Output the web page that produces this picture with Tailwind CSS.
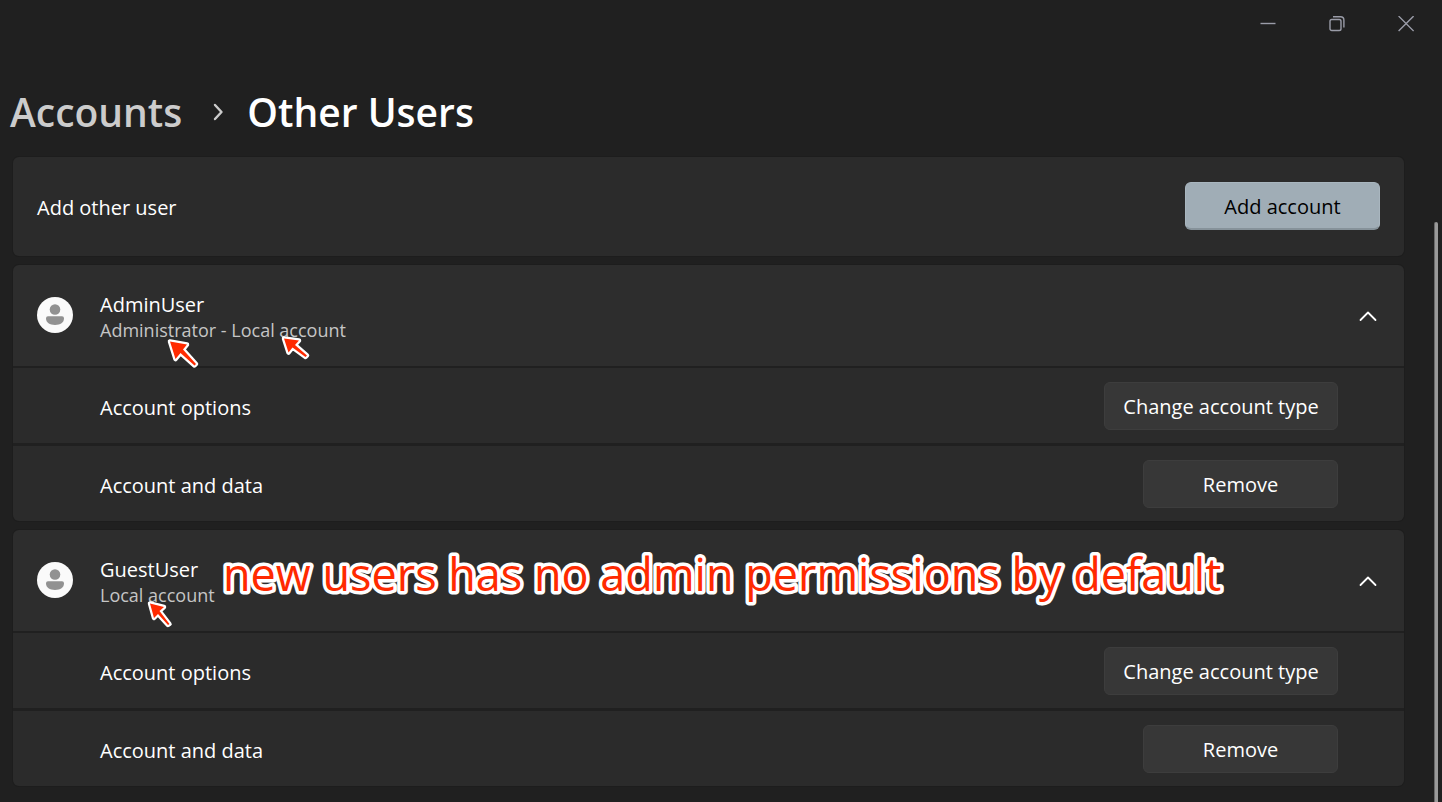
<!DOCTYPE html>
<html lang="en">
<head>
<meta charset="utf-8">
<meta name="viewport" content="width=device-width, initial-scale=1">
<title>Accounts - Other Users</title>
<script src="https://cdn.jsdelivr.net/npm/@tailwindcss/browser@4"></script>
</head>
<body class="relative min-h-screen overflow-hidden bg-[#202020] font-['Open_Sans','Noto_Sans',sans-serif] text-xl text-white">
<header class="flex h-12 justify-end pr-0.5 text-[#9a9ca8]">
  <button type="button" aria-label="Minimize" class="flex w-[69px] items-center justify-center"><svg class="size-4" viewBox="0 0 16 16" fill="none" stroke="currentColor" stroke-width="1.4"><path d="M.5 7.5h15"/></svg></button>
  <button type="button" aria-label="Restore" class="flex w-[69px] items-center justify-center"><svg class="size-4" viewBox="0 0 16 16" fill="none" stroke="currentColor" stroke-width="1.4"><rect x="1" y="3.5" width="11" height="11" rx="1.8"/><path d="M4 .8h7.5a3.4 3.4 0 0 1 3.4 3.4v7.3"/></svg></button>
  <button type="button" aria-label="Close" class="flex w-[69px] items-center justify-center"><svg class="size-4" viewBox="0 0 16 16" fill="none" stroke="currentColor" stroke-width="1.4"><path d="M.6.1l15 15M15.600.1l-15 15"/></svg></button>
</header>

<main class="flex flex-col pr-[38px] pl-[13px]">
  <nav aria-label="Breadcrumb" class="-ml-[3px] flex h-[109px] items-center pt-5 text-[39px] font-semibold">
    <a href="#" class="text-[#cccccc]">Accounts</a>
    <svg class="mr-[21px] ml-7 h-5 w-4" viewBox="0 0 16 20" fill="none" stroke="#cccccc" stroke-width="2.4" stroke-linecap="round" stroke-linejoin="round"><path d="M5 2l6.500 7-6.500 7"/></svg>
    <h1>Other Users</h1>
  </nav>

  <div class="flex flex-col gap-[9px]">
    <section class="flex h-[99px] items-center justify-between rounded-md bg-[#2b2b2b] px-6 pb-px shadow-[0_0_0_1px_#1d1d1d]">
      <h2 class="pt-1">Add other user</h2>
      <button type="button" class="h-12 w-[195px] rounded-md border border-b-2 border-[#a9b6bf] border-b-[#86929a] bg-[#a0adb6] pt-0.5 text-black">Add account</button>
    </section>

    <section class="flex flex-col rounded-md shadow-[0_0_0_1px_#1d1d1d]">
      <div class="relative flex h-[101px] items-center rounded-t-md bg-[#2d2d2d] px-6 pb-px">
        <svg class="size-9" viewBox="0 0 36 36"><circle cx="18" cy="18" r="18" fill="#fafafa"/><g fill="#919191"><circle cx="18" cy="12.500" r="5.300"/><path d="M11 19.300h14a2 2 0 0 1 2 2c0 4.400-3.600 6.700-9 6.700s-9-2.300-9-6.700a2 2 0 0 1 2-2z"/></g></svg>
        <div class="ml-[27px] flex flex-col pt-[3px]">
          <h2 class="leading-[26px]">AdminUser</h2>
          <p class="text-lg leading-6 text-[#c5c5c5]">Administrator - Local account</p>
        </div>
        <button type="button" aria-label="Collapse AdminUser" class="-mr-1 ml-auto p-1"><svg class="h-5 w-6" viewBox="0 0 24 20" fill="none" stroke="#fff" stroke-width="1.800" stroke-linecap="round" stroke-linejoin="round"><path d="M4.500 15l7.500-7.500 7.500 7.500"/></svg></button>
        <svg class="absolute top-[72px] left-[153px] h-8 w-9 overflow-visible" viewBox="0 0 36 32" stroke="#fff" stroke-width="4.500" stroke-linejoin="round" fill="#ff2a00" paint-order="stroke"><path d="M4 4.500l17 3-4 5 13 14.500-1.500 1.500-14-12.500-5 6z"/></svg>
        <svg class="absolute top-[69px] left-[267px] h-8 w-9 overflow-visible" viewBox="0 0 36 32" stroke="#fff" stroke-width="4.500" stroke-linejoin="round" fill="#ff2a00" paint-order="stroke"><path d="M4 4.500l15 2-4 4.500 12 10.500-1.500 1.500-13-9.500-4 5z"/></svg>
      </div>
      <div class="mt-0.5 flex h-[75px] items-center justify-between bg-[#2b2b2b] pr-[66px] pl-[87px]">
        <h3 class="pt-1">Account options</h3>
        <button type="button" class="h-12 w-[234px] rounded-md border border-[#3d3d3d] bg-[#373737] pt-0.5">Change account type</button>
      </div>
      <div class="mt-[3px] flex h-[75px] items-center justify-between rounded-b-md bg-[#2b2b2b] pr-[66px] pl-[87px]">
        <h3 class="pt-1">Account and data</h3>
        <button type="button" class="h-12 w-[195px] rounded-md border border-[#3d3d3d] bg-[#373737] pt-0.5">Remove</button>
      </div>
    </section>

    <section class="flex flex-col rounded-md shadow-[0_0_0_1px_#1d1d1d]">
      <div class="relative flex h-[101px] items-center rounded-t-md bg-[#2d2d2d] px-6 pb-px">
        <svg class="size-9" viewBox="0 0 36 36"><circle cx="18" cy="18" r="18" fill="#fafafa"/><g fill="#919191"><circle cx="18" cy="12.500" r="5.300"/><path d="M11 19.300h14a2 2 0 0 1 2 2c0 4.400-3.600 6.700-9 6.700s-9-2.300-9-6.700a2 2 0 0 1 2-2z"/></g></svg>
        <div class="ml-[27px] flex flex-col pt-[3px]">
          <h2 class="leading-[26px]">GuestUser</h2>
          <p class="text-lg leading-6 text-[#c5c5c5]">Local account</p>
        </div>
        <button type="button" aria-label="Collapse GuestUser" class="-mr-1 ml-auto p-1"><svg class="h-5 w-6" viewBox="0 0 24 20" fill="none" stroke="#fff" stroke-width="1.800" stroke-linecap="round" stroke-linejoin="round"><path d="M4.500 15l7.500-7.500 7.500 7.500"/></svg></button>
        <svg class="absolute top-3 left-[210px] h-16 w-[1010px] overflow-visible text-[45px]" fill="#ff2a00" stroke="#fff" stroke-width="7" stroke-linejoin="round" stroke-linecap="round" paint-order="stroke"><text x="0" y="49">new users has no admin permissions by default</text></svg>
        <svg class="absolute top-[69px] left-[133px] h-8 w-9 overflow-visible" viewBox="0 0 36 32" stroke="#fff" stroke-width="4.500" stroke-linejoin="round" fill="#ff2a00" paint-order="stroke"><path d="M4 4.500l14 3.500-4.500 4 10 13-1.500 1-10-11-4 4z"/></svg>
      </div>
      <div class="mt-0.5 flex h-[75px] items-center justify-between bg-[#2b2b2b] pr-[66px] pl-[87px]">
        <h3 class="pt-1">Account options</h3>
        <button type="button" class="h-12 w-[234px] rounded-md border border-[#3d3d3d] bg-[#373737] pt-0.5">Change account type</button>
      </div>
      <div class="mt-[3px] flex h-[75px] items-center justify-between rounded-b-md bg-[#2b2b2b] pr-[66px] pl-[87px]">
        <h3 class="pt-1">Account and data</h3>
        <button type="button" class="h-12 w-[195px] rounded-md border border-[#3d3d3d] bg-[#373737] pt-0.5">Remove</button>
      </div>
    </section>
  </div>
</main>

<div class="absolute top-[222px] right-1 bottom-0 w-1 rounded-t-full border-l border-[#6a6a6a] bg-[#9a9a9a]"></div>
</body>
</html>
